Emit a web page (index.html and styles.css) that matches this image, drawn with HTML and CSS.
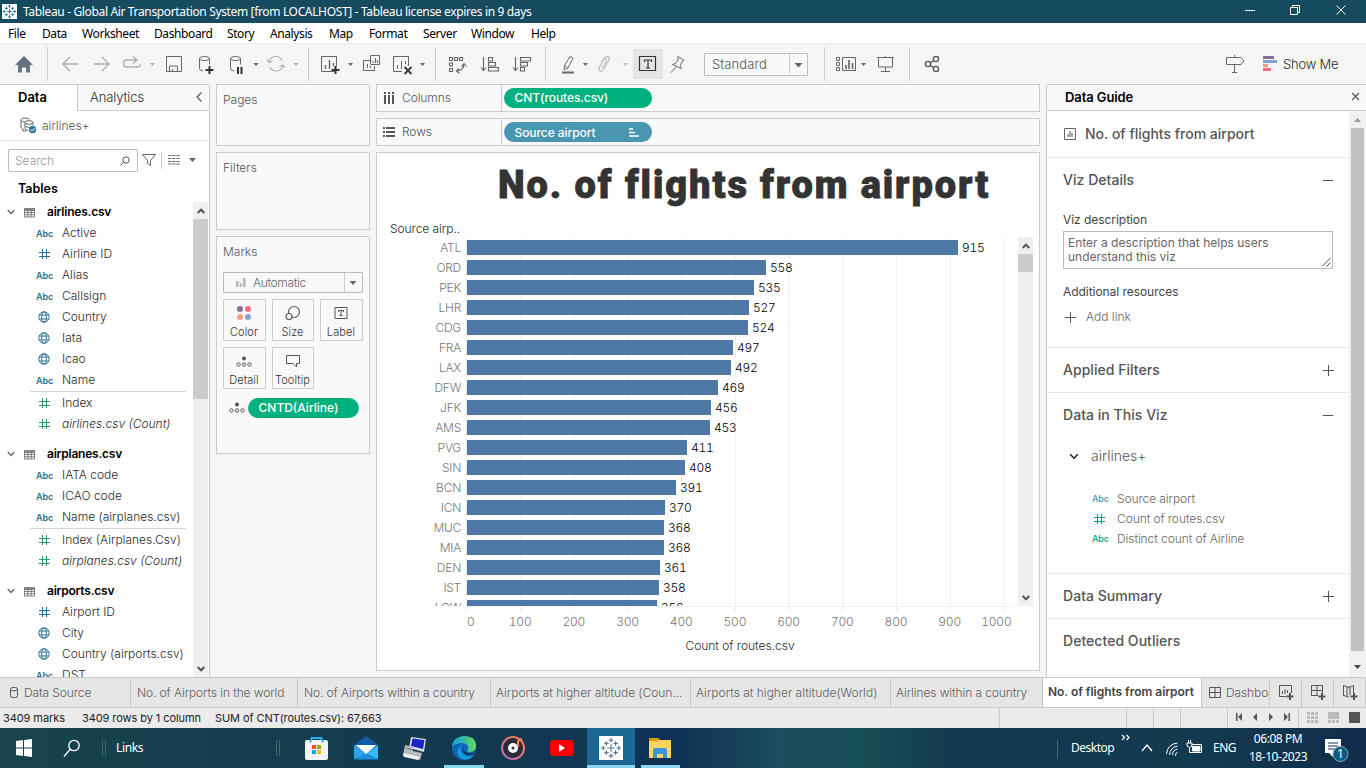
FILE: index.html
```html
<!DOCTYPE html>
<html lang="en">
<head>
<meta charset="utf-8">
<title>Tableau - Global Air Transportation System</title>
<link rel="stylesheet" href="styles.css">
</head>
<body>
<svg class="defs" width="0" height="0">
  <defs>
    <symbol id="hash" viewBox="0 0 12 12"><path d="M4.500 1v10M8.500 1v10M1 4.500h11M1 8.500h11" fill="none" stroke="currentColor" stroke-width="1"/></symbol>
    <symbol id="globe" viewBox="0 0 12 12"><g fill="none" stroke="currentColor"><circle cx="6" cy="6" r="5.2"/><ellipse cx="6" cy="6" rx="2.3" ry="5.2"/><path d="M1.4 4h9.200M1.400 8h9.200"/></g></symbol>
    <symbol id="table" viewBox="0 0 11 11"><path d="M.5 1.500h10v8.500H.5zM.5 3.500h10M.5 5.500h10M.5 7.700h10M3.800 3v7M7.200 3v7M.5 2.500h10" fill="none" stroke="#666" stroke-width=".8"/></symbol>
    <symbol id="chev" viewBox="0 0 8 6"><path d="M.7 1l3.300 3.500L7.300 1" fill="none" stroke="currentColor" stroke-width="1.300"/></symbol>
    <symbol id="arrow" viewBox="0 0 8 6"><path d="M.7 1l3.300 3.300L7.300 1" fill="none" stroke="currentColor" stroke-width="2"/></symbol>
    <symbol id="logo" viewBox="0 0 24 24"><g fill="none" stroke="currentColor" stroke-width="1.300"><path d="M12 8v8M8 12h8M12 1v5M9.500 3.500h5M12 18v5M9.500 20.500h5M3.500 9.500v5M1 12h5M20.500 9.500v5M18 12h5M7 4.500v5M4.500 7h5M17 4.500v5M14.500 7h5M7 14.500v5M4.500 17h5M17 14.500v5M14.500 17h5"/></g></symbol>
    <symbol id="detail" viewBox="0 0 16 12"><circle cx="8" cy="2.500" r="2" fill="#555"/><g fill="none" stroke="#555"><circle cx="2.500" cy="8.500" r="1.700"/><circle cx="8" cy="8.500" r="1.700"/><circle cx="13.500" cy="8.500" r="1.700"/></g></symbol>
  </defs>
</svg>

<header class="titlebar">
  <span class="app-logo"><svg width="15" height="15"><use href="#logo"/></svg></span>
  <span class="win-title">Tableau - Global Air Transportation System [from LOCALHOST] - Tableau license expires in 9 days</span>
  <svg class="win-buttons" width="126" height="23" viewBox="1240 0 126 23" fill="none" stroke="#fff"><path d="M1245 10.500h10M1290.500 7.500h7v7h-7zM1292.500 7.500v-2h7v7h-2M1336.500 5.500l9 9M1345.500 5.500l-9 9"/></svg>
</header>

<nav class="menubar"><span class="m1">File</span><span class="m2">Data</span><span class="m3">Worksheet</span><span class="m4">Dashboard</span><span class="m5">Story</span><span class="m6">Analysis</span><span class="m7">Map</span><span class="m8">Format</span><span class="m9">Server</span><span class="m10">Window</span><span class="m11">Help</span></nav>

<div class="toolbar">
  <svg width="47" height="41" viewBox="0 43 47 41"><path d="M15 65l9-9 9 9h-3v7.500h-4v-5h-4v5h-4V65z" fill="#66737f"/></svg>
  <i class="sep"></i>
  <svg width="112" height="41" viewBox="48 43 112 41" fill="none" stroke="#b0b0b0" stroke-width="1.400"><path d="M78 64H63M70 57l-7 7 7 7M94 64h15M102 57l7 7-7 7M137 60h-10q-3.500 0-3.500 3.500t3.500 3.500h10q3.500 0 3.500-3M133 56.500l4 3.500-4 3.500"/><path d="M150 63h5l-2.500 3z" fill="#b0b0b0" stroke="none"/></svg>
  <svg width="30" height="41" viewBox="160 43 30 41" fill="none" stroke="#666"><path d="M166.500 56.500h15v15h-15zM169.500 71v-5h8v5M172.500 71v-2"/></svg>
  <svg width="72" height="41" viewBox="190 43 72 41" fill="none" stroke="#666"><ellipse cx="204.500" cy="58.500" rx="5" ry="2"/><path d="M199.500 58.500v10q0 2 3.500 2.500M209.500 58.500v6"/><path d="M209.500 66v8M205.500 70h8" stroke="#333" stroke-width="2"/><ellipse cx="235.500" cy="58.500" rx="5" ry="2"/><path d="M230.500 58.500v10q0 2 3.500 2.500M240.500 58.500v6"/><path d="M238 67v7M241.500 67v7" stroke="#333" stroke-width="2"/><path d="M253.500 63h5l-2.500 3z" fill="#666" stroke="none"/></svg>
  <svg width="46" height="41" viewBox="262 43 46 41" fill="none" stroke="#b0b0b0" stroke-width="1.200"><path d="M269 62q1-5.500 7-5.500 4 0 6 4M283 65q-1 6-7 6-4 0-6-4M267 59.500l2 3 3.500-1.500M285 68l-2-3-3.500 1.500"/><path d="M293.500 63h5l-2.500 3z" fill="#b0b0b0" stroke="none"/></svg>
  <i class="sep"></i>
  <svg width="126" height="41" viewBox="309 43 126 41" fill="none" stroke="#666"><path d="M334 71.500h-12.500v-15h15V66"/><path d="M325.500 69v-4M329.500 69v-9M333.500 66v-3" stroke-width="1.400"/><path d="M335.500 66v8M331.500 70h8" stroke="#333" stroke-width="2"/><path d="M370 60.500h-6.500v10h11V66M370.500 55.500h9v9h-9zM367.500 68v-4M370.500 68v-2M373 63v-2M375.500 63v-5M377.500 63v-3"/><path d="M402 71.500h-8.500v-15h15V66M397.500 69v-4M401.500 69v-8M405.500 64v-3"/><path d="M404.500 67l7 7M411.500 67l-7 7" stroke="#333" stroke-width="1.800"/><path d="M348 63h5l-2.500 3zM420 63h5l-2.500 3z" fill="#666" stroke="none"/></svg>
  <i class="sep"></i>
  <svg width="109" height="41" viewBox="436 43 109 41" fill="none" stroke="#666" stroke-width="1.100"><path d="M449.500 57.500h3v3h-3zM454.500 57.500h3v3h-3zM459.500 57.500h3v3h-3zM449.500 63h3v3h-3zM449.500 68.500h3v3h-3zM464 64q0 6-7 7M461.500 66.500l2.500-3 2.500 3M459 68.500l-2.500 2.500 3 2.500M483.500 57v13M481 67.500l2.500 3 2.500-3M488.500 57.500h4v3.500h-4zM488.500 62.500h7v3.500h-7zM488.500 67.500h10v3.500h-10zM515.500 57v13M513 67.500l2.500 3 2.500-3M520.500 57.500h10v3.500h-10zM520.500 62.500h7v3.500h-7zM520.500 67.500h4v3.500h-4z"/></svg>
  <i class="sep"></i>
  <svg width="87" height="41" viewBox="546 43 87 41" fill="none" stroke="#666"><path d="M570 56.500l3 1.500-5 10-4 2 .5-4.500zM564.500 65.500l3 2"/><path d="M562 72.500h12" stroke-width="2"/><path d="M583 63h5l-2.500 3z" fill="#666" stroke="none"/><path d="M602 68.500l4.500-8q.5-2-1-2t-2 1l-4 7.500q-1.500 4 .5 4.500t3.500-2l5-8.500q2-4-.5-4.500t-4 2l-2 3.500" stroke="#aaa"/><path d="M623 63h5l-2.500 3z" fill="#bbb" stroke="none"/></svg>
  <svg class="pressed" width="30" height="30" viewBox="633 49 30 30" fill="none" stroke="#333"><path d="M639.500 56.500h16v14h-16zM644.500 62v-2h7v2M648 60v8M646 68h4" stroke-width="1.200"/></svg>
  <svg width="41" height="41" viewBox="663 43 41 41" fill="none" stroke="#666"><path d="M678 56.500l6 4-2 1-1.500 4 1 3-9-4 3-1 2.500-3.500zM676 67l-5 5.500"/></svg>
  <div class="fit"><span>Standard</span><svg width="18" height="20" viewBox="0 0 18 20"><path d="M.5 0v20" stroke="#ccc"/><path d="M5.500 9h8l-4 4.500z" fill="#666"/></svg></div>
  <svg width="16" height="41"></svg>
  <i class="sep"></i>
  <svg width="84" height="41" viewBox="825 43 84 41" fill="none" stroke="#666"><path d="M836.500 57.500h3v3h-3zM836.500 62.500h3v3h-3zM836.500 67.500h3v3h-3zM842.500 57.500h13v13h-13z"/><path d="M846 69v-4M849 69v-9M852.500 69v-6" stroke-width="1.600"/><path d="M861 63h5l-2.500 3z" fill="#666" stroke="none"/><path d="M877 57.500h17M878.500 58v9h14v-9M885.500 56v2M885.500 67v5M881 71.500h9"/></svg>
  <i class="sep"></i>
  <svg width="290" height="41" viewBox="910 43 290 41" fill="none" stroke="#555" stroke-width="1.300"><circle cx="928" cy="64" r="2.600"/><circle cx="936" cy="59" r="2.600"/><circle cx="936" cy="69" r="2.600"/><path d="M930.500 63l3-2.500M930.500 65.500l3 2.200"/></svg>
  <svg width="78" height="41" viewBox="1200 43 78 41"><path d="M1226.500 57.500h14.500l3 3.500-3 3.500h-14.500zM1234.500 55v3M1234.500 64.500v8M1232 72.500h5" fill="none" stroke="#666"/><path d="M1263 56h11v3h-11z" fill="#866e99"/><path d="M1263 60h14v3h-14z" fill="#80a4cc"/><path d="M1263 64h5v3h-5z" fill="#f4a17b"/><path d="M1263 68h8v3h-8z" fill="#fa6a7c"/></svg>
  <span class="showme">Show Me</span>
</div>

<main class="workspace">
  <aside class="data-pane">
    <div class="pane-tabs"><b>Data</b><div class="analytics"><span>Analytics</span><svg width="8" height="12" viewBox="0 0 8 12"><path d="M6.500 1.500L2 6l4.500 4.500" fill="none" stroke="#555" stroke-width="1.200"/></svg></div></div>
    <div class="source"><svg width="17" height="17" viewBox="0 0 17 17" fill="none" stroke="#666"><path d="M3 12Q1 11 1 10V2.500Q1 1 5 1t4.500 1.500M1 3q1 2 4 2"/><ellipse cx="9" cy="5.500" rx="4" ry="1.800" fill="#fff"/><path d="M5 5.500v6q0 2 3 2M13 5.500v3M5 8.500q1 2 4 2M3 12v2h3"/><circle cx="12.500" cy="12.500" r="3.700" fill="#2d7da4" stroke="none"/><path d="M10.700 12.500l1.500 1.500 2.500-2.800" stroke="#fff"/></svg><span>airlines+</span></div>
    <div class="search-row">
      <div class="search"><span>Search</span><svg width="10" height="10" viewBox="0 0 10 10" fill="none" stroke="#555"><circle cx="6" cy="4" r="3.200"/><path d="M3.700 6.300L.5 9.500"/></svg></div>
      <svg width="70" height="23" viewBox="138 149 70 23" fill="none" stroke="#666"><path d="M142.500 154.500h13l-5 6v5l-3-2v-3z"/><path d="M161.500 152v17" stroke="#ccc"/><path d="M168 155.500h12M168 158.500h12M168 161.500h12M168 164h12" stroke-dasharray="3.200 1"/><path d="M189 158h7l-3.500 4z" fill="#666" stroke="none"/></svg>
    </div>
    <div class="tables-label">Tables</div>
    <div class="list-wrap">
      <div class="field-list">
        <div class="tbl"><svg width="8" height="6"><use href="#chev"/></svg><svg width="11" height="11"><use href="#table"/></svg><b>airlines.csv</b></div>
        <div class="fld"><em>Abc</em>Active</div>
        <div class="fld"><svg><use href="#hash"/></svg>Airline ID</div>
        <div class="fld"><em>Abc</em>Alias</div>
        <div class="fld"><em>Abc</em>Callsign</div>
        <div class="fld"><svg><use href="#globe"/></svg>Country</div>
        <div class="fld"><svg><use href="#globe"/></svg>Iata</div>
        <div class="fld"><svg><use href="#globe"/></svg>Icao</div>
        <div class="fld"><em>Abc</em>Name</div>
        <hr>
        <div class="fld green"><svg><use href="#hash"/></svg>Index</div>
        <div class="fld green"><svg><use href="#hash"/></svg><i>airlines.csv (Count)</i></div>
        <div class="tbl next"><svg width="8" height="6"><use href="#chev"/></svg><svg width="11" height="11"><use href="#table"/></svg><b>airplanes.csv</b></div>
        <div class="fld"><em>Abc</em>IATA code</div>
        <div class="fld"><em>Abc</em>ICAO code</div>
        <div class="fld"><em>Abc</em>Name (airplanes.csv)</div>
        <hr>
        <div class="fld green"><svg><use href="#hash"/></svg>Index (Airplanes.Csv)</div>
        <div class="fld green"><svg><use href="#hash"/></svg><i>airplanes.csv (Count)</i></div>
        <div class="tbl next"><svg width="8" height="6"><use href="#chev"/></svg><svg width="11" height="11"><use href="#table"/></svg><b>airports.csv</b></div>
        <div class="fld"><svg><use href="#hash"/></svg>Airport ID</div>
        <div class="fld"><svg><use href="#globe"/></svg>City</div>
        <div class="fld"><svg><use href="#globe"/></svg>Country (airports.csv)</div>
        <div class="fld"><em>Abc</em>DST</div>
      </div>
      <div class="scroll left-scroll"><svg class="up" width="8" height="6"><use href="#arrow"/></svg><i></i><svg class="down" width="8" height="6"><use href="#arrow"/></svg></div>
    </div>
  </aside>

  <section class="cards">
    <div class="card pages">Pages</div>
    <div class="card filters">Filters</div>
    <div class="card marks">Marks
      <div class="mark-type"><svg width="10" height="10" viewBox="0 0 10 10" fill="#b5b5b5"><path d="M0 3h2.500v6H0zM3.700 5h2v4h-2zM7 0h2.500v9H7z"/></svg><span>Automatic</span><svg width="18" height="19" viewBox="0 0 18 19"><path d="M.5 0v19" stroke="#ccc"/><path d="M5.500 8h7L9 12z" fill="#666"/></svg></div>
      <div class="mark-grid">
        <div><svg width="16" height="16" viewBox="0 0 16 16"><circle cx="4" cy="4" r="3" fill="#866e99"/><circle cx="12" cy="4" r="3" fill="#fa6a7c"/><circle cx="4" cy="12" r="3" fill="#f4a17b"/><circle cx="12" cy="12" r="3" fill="#80a4cc"/></svg>Color</div>
        <div><svg width="16" height="16" viewBox="0 0 16 16" fill="none" stroke="#555" stroke-width="1.100"><circle cx="9" cy="7" r="5.500"/><circle cx="4" cy="11.500" r="3" fill="#f9f9f9"/></svg>Size</div>
        <div><svg width="16" height="16" viewBox="0 0 16 16" fill="none" stroke="#555"><path d="M2 2.500h12v11H2zM5.500 7V5.500h5V7M8 5.500v5M6.500 10.500h3"/></svg>Label</div>
        <div><svg width="16" height="16" viewBox="0 -3 16 16"><use href="#detail" width="16" height="12"/></svg>Detail</div>
        <div><svg width="16" height="16" viewBox="0 0 16 16" fill="none" stroke="#555"><path d="M1.500 2.500h13v8h-3v3.500L8 10.500H1.500z"/></svg>Tooltip</div>
      </div>
      <div class="mark-pill"><svg width="16" height="12"><use href="#detail"/></svg><span class="pill green-pill">CNTD(Airline)</span></div>
    </div>
  </section>

  <section class="sheet">
    <div class="shelf"><div><svg width="12" height="12" viewBox="0 0 12 12"><path d="M2 0v2M2 3v9M6 0v2M6 3v9M10 0v2M10 3v9" stroke="#555" stroke-width="2"/></svg>Columns</div><span class="pill green-pill">CNT(routes.csv)</span></div>
    <div class="shelf"><div><svg width="12" height="12" viewBox="0 0 12 12"><path d="M0 2h2M3 2h9M0 6h2M3 6h9M0 10h2M3 10h9" stroke="#555" stroke-width="2"/></svg>Rows</div><span class="pill blue-pill">Source airport<svg width="11" height="9" viewBox="0 0 11 9"><path d="M0 1h4M0 4.500h6M0 8h10" stroke="#fff" stroke-width="1.600"/></svg></span></div>
    <div class="viz">
      <h1>No. of flights from airport</h1>
      <div class="row-title">Source airp..</div>
      <div class="chart-area">
        <svg class="grid" width="549" height="376" viewBox="465 237 549 376"><path d="M466.500 237v375M520.500 237v375M574.500 237v375M627.500 237v375M681.500 237v375M735.500 237v375M789.500 237v375M842.500 237v375M896.500 237v375M950.500 237v375M1004.500 237v375M466 606.500h548" stroke="#f0f0f0"/></svg>
        <div class="plot">
          <div class="bar-row"><span>ATL</span><i style="width:491px"></i><b>915</b></div>
          <div class="bar-row"><span>ORD</span><i style="width:299px"></i><b>558</b></div>
          <div class="bar-row"><span>PEK</span><i style="width:287px"></i><b>535</b></div>
          <div class="bar-row"><span>LHR</span><i style="width:282px"></i><b>527</b></div>
          <div class="bar-row"><span>CDG</span><i style="width:281px"></i><b>524</b></div>
          <div class="bar-row"><span>FRA</span><i style="width:266px"></i><b>497</b></div>
          <div class="bar-row"><span>LAX</span><i style="width:264px"></i><b>492</b></div>
          <div class="bar-row"><span>DFW</span><i style="width:251px"></i><b>469</b></div>
          <div class="bar-row"><span>JFK</span><i style="width:244px"></i><b>456</b></div>
          <div class="bar-row"><span>AMS</span><i style="width:243px"></i><b>453</b></div>
          <div class="bar-row"><span>PVG</span><i style="width:220px"></i><b>411</b></div>
          <div class="bar-row"><span>SIN</span><i style="width:218px"></i><b>408</b></div>
          <div class="bar-row"><span>BCN</span><i style="width:209px"></i><b>391</b></div>
          <div class="bar-row"><span>ICN</span><i style="width:198px"></i><b>370</b></div>
          <div class="bar-row"><span>MUC</span><i style="width:197px"></i><b>368</b></div>
          <div class="bar-row"><span>MIA</span><i style="width:197px"></i><b>368</b></div>
          <div class="bar-row"><span>DEN</span><i style="width:193px"></i><b>361</b></div>
          <div class="bar-row"><span>IST</span><i style="width:192px"></i><b>358</b></div>
          <div class="bar-row"><span>LGW</span><i style="width:190px"></i><b>356</b></div>
        </div>
        <div class="scroll viz-scroll"><svg class="up" width="8" height="6"><use href="#arrow"/></svg><i></i><svg class="down" width="8" height="6"><use href="#arrow"/></svg></div>
      </div>
      <div class="axis"><span class="first">0</span><span>100</span><span>200</span><span>300</span><span>400</span><span>500</span><span>600</span><span>700</span><span>800</span><span>900</span><span class="last">1000</span></div>
      <div class="axis-title">Count of routes.csv</div>
    </div>
  </section>

  <aside class="guide">
    <div class="guide-head"><b>Data Guide</b><svg width="9" height="9" viewBox="0 0 9 9"><path d="M1 1l7 7M8 1L1 8" stroke="#555" stroke-width="1.200"/></svg></div>
    <div class="guide-main">
      <div class="guide-body">
        <div class="g-title"><svg width="12" height="12" viewBox="0 0 12 12"><path d="M.5.5h11v11H.5z" fill="none" stroke="#666"/><path d="M3 9V6h2V3h2v2h2v4z" fill="#aaa"/></svg>No. of flights from airport</div>
        <div class="g-details">
          <h2>Viz Details<i class="minus"></i></h2>
          <label>Viz description</label>
          <div class="textarea">Enter a description that helps users<br>understand this viz<svg width="9" height="9" viewBox="0 0 9 9"><path d="M0 8.500L8.500 0M4.500 8.500l4-4" stroke="#555"/></svg></div>
          <label class="res">Additional resources</label>
          <div class="add"><i class="plus"></i>Add link</div>
        </div>
        <div class="g-one"><h2>Applied Filters<i class="plus"></i></h2></div>
        <div class="g-data">
          <h2>Data in This Viz<i class="minus"></i></h2>
          <div class="g-source"><svg width="10" height="7"><use href="#chev" width="10" height="7"/></svg>airlines+</div>
          <div class="g-field blue"><em>Abc</em>Source airport</div>
          <div class="g-field"><svg width="12" height="12" viewBox="0 0 12 12"><path d="M4.500 1v10M8.500 1v10M1 4.500h11M1 8.500h11" fill="none" stroke="#00a87e" stroke-width="1.200"/></svg>Count of routes.csv</div>
          <div class="g-field"><em>Abc</em>Distinct count of Airline</div>
        </div>
        <div class="g-one"><h2>Data Summary<i class="plus"></i></h2></div>
        <div class="g-one end"><h2>Detected Outliers</h2></div>
      </div>
      <div class="guide-scroll"><svg width="17" height="17" viewBox="0 0 17 17"><path d="M5 11h7L8.500 7z" fill="#999"/></svg><i></i><svg width="17" height="26" viewBox="0 0 17 26"><path d="M5 14h7l-3.500 4z" fill="#444"/></svg></div>
    </div>
  </aside>
</main>

<div class="sheet-tabs">
  <span class="t1"><svg width="8" height="12" viewBox="0 0 8 12" fill="none" stroke="#555"><rect x=".5" y=".5" width="7" height="10" rx="2"/><path d="M.5 3q3.500 2 7 0"/></svg>Data Source</span>
  <span class="t2">No. of Airports in the world</span><span class="t3">No. of Airports within a country</span><span class="t4">Airports at higher altitude (Coun...</span><span class="t5">Airports at higher altitude(World)</span><span class="t6">Airlines within a country</span><b class="t7">No. of flights from airport</b>
  <span class="t8"><svg width="12" height="12" viewBox="0 0 12 12" fill="none" stroke="#555"><path d="M.5.5h11v10H.5zM.5 5.500h11M6 0v11"/></svg>Dashboard</span>
  <span class="tn"><svg width="17" height="16" viewBox="0 0 17 16" fill="none" stroke="#555"><path d="M8 11.500H1.500V.5h12V8M4.500 9V6M7 9V4M9.500 8V5"/><path d="M12 8v7M8.500 11.500h7" stroke-width="2"/></svg></span>
  <span class="tn"><svg width="17" height="16" viewBox="0 0 17 16" fill="none" stroke="#555"><path d="M8 10.500H1.500V.5h11V8M1.500 5.500h11M7 .5v10"/><path d="M12 8v7M8.500 11.500h7" stroke-width="2"/></svg></span>
  <span class="tn"><svg width="17" height="16" viewBox="0 0 17 16" fill="none" stroke="#555"><path d="M7 12L1.500 10.500V.5L5 2v9M5 2h3l3.500-1.500v8M8 2v8"/><path d="M12 8v7M8.500 11.500h7" stroke-width="2"/></svg></span>
</div>

<div class="status">
  <span class="s1">3409 marks</span><span class="s2">3409 rows by 1 column</span><span class="s3">SUM of CNT(routes.csv): 67,663</span>
  <svg width="386" height="20" viewBox="980 708 386 20"><path d="M999.500 708v20M1126.500 708v20M1153.500 708v20M1180.500 708v20M1227.500 708v20M1298.500 708v20" stroke="#c8c8c8"/><g fill="#555"><path d="M1236 713h1.500v8h-1.500zM1242 713v8l-4-4zM1257 713v8l-4-4zM1269 713v8l4-4zM1284 713v8l4-4zM1288.500 713h1.500v8h-1.500z"/><path d="M1349 712h11v11h-11z"/></g><g fill="#bbb"><path d="M1307 712h3v3h-3zM1311 712h3v3h-3zM1315 712h3v3h-3zM1307 716h3v3h-3zM1311 716h3v3h-3zM1315 716h3v3h-3zM1307 720h3v3h-3zM1311 720h3v3h-3zM1315 720h3v3h-3zM1328 712h11v7h-11zM1328 720h3v3h-3zM1332 720h3v3h-3zM1336 720h3v3h-3z"/></g></svg>
</div>

<footer class="taskbar">
  <svg width="112" height="40" viewBox="0 728 112 40"><path d="M16 741l7-1v7.500h-7zM24 740l8-1v8.500h-8zM16 748.500h7v7.500l-7-1zM24 748.500h8v8.500l-8-1z" fill="#fff"/><g fill="none" stroke="#fff" stroke-width="1.300"><circle cx="74" cy="745.500" r="5.200"/><path d="M70 749.500l-6 7"/></g><path d="M102.500 740v16M105.500 740v16" stroke="#47646f"/></svg>
  <span class="links">Links</span>
  <svg width="146" height="40" viewBox="149 728 146 40"><path d="M276.500 740v16M279.500 740v16" stroke="#47646f"/></svg>
  <svg width="46" height="40" viewBox="295 728 46 40"><path d="M311.500 742v-4h10v4" fill="none" stroke="#1eb5f0" stroke-width="2"/><rect x="305" y="740" width="23" height="20" rx="2" fill="#f4f4f4"/><path d="M310.500 740v2.500M322.500 740v2.500" stroke="#1eb5f0" stroke-width="2"/><path d="M312 745h4v4h-4z" fill="#f25022"/><path d="M317 745h4v4h-4z" fill="#7fba00"/><path d="M312 750h4v4h-4z" fill="#00a4ef"/><path d="M317 750h4v4h-4z" fill="#ffb900"/></svg>
  <svg width="49" height="40" viewBox="341 728 49 40"><path d="M354 745l12-9 12 9v14h-24z" fill="#0f5ca8"/><path d="M354 745l12 9-12 5z" fill="#28a7ea"/><path d="M378 745l-12 9 12 5z" fill="#38b9f5"/><path d="M354 759.500l12-7 12 7z" fill="#1b90e0"/><path d="M355.500 745h21l-10.500 9z" fill="#fff"/></svg>
  <svg width="49" height="40" viewBox="390 728 49 40"><path d="M411 737l15 2-2 13-15-4z" fill="#dcdcdc"/><path d="M412.500 738.500l12 1.500-1.500 9-12-3z" fill="#1726ca"/><path d="M405 745l8 2v4l9 2-2 7-17-4z" fill="#b8bcc0"/><path d="M403 753l17 4-2 3-14-3z" fill="#eee"/><path d="M406 748l7 2" stroke="#666"/></svg>
  <svg width="49" height="40" viewBox="439 728 49 40"><defs><linearGradient id="edgeg"><stop stop-color="#139fe2"/><stop offset="1" stop-color="#61da5a"/></linearGradient></defs><circle cx="464" cy="748" r="12" fill="#0c65b9"/><path d="M452 748q0-11 12-12 12 0 12 10c0 6-6 7-9 5 3-4 0-8-5-8-6 0-10 3-10 5z" fill="url(#edgeg)"/><path d="M464 744q-6 4-2 9 4 5 12 2-5 6-12 4-6-3-4-9 1-4 6-6z" fill="#169bd4"/><path d="M464 746q-2 5 3 7 4 1 8-1l-3 3q-8 1-9-4 0-3 1-5z" fill="#123350"/><path d="M444 765h40v3h-40z" fill="#8bd5f3"/></svg>
  <svg width="49" height="40" viewBox="488 728 49 40"><defs><linearGradient id="music" x1="1" y1="0" x2="0" y2="1"><stop stop-color="#ff8040"/><stop offset="1" stop-color="#b46bc3"/></linearGradient></defs><circle cx="513" cy="748" r="11" fill="#292b35" stroke="url(#music)" stroke-width="2"/><circle cx="513" cy="748" r="5" fill="#fff"/><circle cx="513" cy="748" r="1.500" fill="#333"/><path d="M518 747v-6l4-2" stroke="#ff865b" fill="none" stroke-width="2"/></svg>
  <svg width="50" height="40" viewBox="537 728 50 40"><rect x="550" y="740" width="24" height="16" rx="4" fill="#f00"/><path d="M559 744v8l6-4z" fill="#fff"/></svg>
  <span class="tab-task"><span><svg width="22" height="22"><use href="#logo"/></svg></span></span>
  <svg width="425" height="40" viewBox="635 728 425 40"><path d="M649 738h9l2 2h11v18h-22z" fill="#ffd45c"/><path d="M649 738h9l1 3h-10z" fill="#dd9b10"/><path d="M653 758v-8q0-2 2-2h10q2 0 2 2v8h-4v-4h-6v4z" fill="#3b96dd"/><path d="M641 765h39v3h-39z" fill="#8bd5f3"/><path d="M1057.500 740v18M1060.500 740v18" stroke="#47646f"/></svg>
  <span class="desk">Desktop</span>
  <svg width="99" height="40" viewBox="1114 728 99 40" fill="none" stroke="#fff"><path d="M1122 735l2.500 2.500-2.500 2.500M1126.500 735l2.500 2.500-2.500 2.500" stroke-width="1.300"/><path d="M1142 751l5-6 5 6" stroke-width="1.300"/><path d="M1166.500 754q1-10 11-11M1169.500 755q1-8 8-9M1172.500 755q0-5 5-6M1175.500 756q0-3 2-4"/><path d="M1191.500 744.500h10v8h-12v-3M1187 743h5v3q-2 3-5 0zM1188.500 740v3M1190.500 740v3M1189.500 748v4"/><path d="M1192.500 746.500h7.500v4.500h-7.500z" fill="#fff"/></svg>
  <span class="lang">ENG</span>
  <span class="clock">06:08 PM<br>18-10-2023</span>
  <span class="notice"><svg width="26" height="26" viewBox="0 0 26 26"><path d="M1 2h16v14h-8v4l-4-4H1z" fill="#fff"/><path d="M4 6h10M4 9h10M4 12h7" stroke="#12344f"/><circle cx="16.500" cy="17" r="7.500" fill="#0a5c85" stroke="#84a9bb"/></svg><i>1</i></span>
</footer>
</body>
</html>
```
FILE: styles.css
```css
* { box-sizing: border-box; }
body { margin: 0; width: 1366px; height: 768px; overflow: hidden; display: flex; flex-direction: column; background: #f5f5f5; font: 350 12px/16px Inter, "Liberation Sans", sans-serif; color: #2a2a2a; white-space: nowrap; }
svg { display: block; flex: none; }
i { font-style: normal; }
.defs { position: absolute; }

.titlebar { height: 23px; flex: none; display: flex; align-items: center; background: #154a5f; color: #fff; font: 12px/23px "Noto Sans", sans-serif; }
.app-logo { width: 15px; height: 15px; margin: 0 6px 0 2px; background: #fff; color: #246589; }
.win-title { width: 1217px; letter-spacing: -.35px; }
.menubar { height: 20px; flex: none; display: flex; background: #fff; color: #000; font: 12px/21px "Noto Sans", sans-serif; letter-spacing: -.4px; padding-left: 8px; }
.m1 { width: 34px; } .m2 { width: 40px; } .m3 { width: 72px; } .m4 { width: 73px; } .m5 { width: 43px; } .m6 { width: 59px; } .m7 { width: 40px; } .m8 { width: 54px; } .m9 { width: 48px; } .m10 { width: 60px; }
.toolbar { height: 41px; flex: none; display: flex; align-items: center; border-top: 1px solid #eee; }
.toolbar > svg { margin-top: -1px; }
.sep { width: 1px; height: 34px; background: #ccc; flex: none; }
.pressed { background: #e4e4e4; }
.fit { width: 104px; height: 23px; display: flex; justify-content: space-between; border: 1px solid #bbb; border-radius: 1px; padding-left: 7px; color: #555; font-size: 13px; line-height: 20px; letter-spacing: .1px; background: #f8f8f8; }
.showme { margin-left: 5px; font-size: 13px; letter-spacing: -.2px; }

.workspace { flex: none; height: 593px; display: flex; }
.data-pane { width: 210px; border: solid #ccc; border-width: 1px 1px 0 0; background: #fff; display: flex; flex-direction: column; }
.pane-tabs { height: 26px; flex: none; display: flex; }
.pane-tabs b { width: 77px; padding-left: 18px; color: #000; font-size: 13px; line-height: 25px; font-weight: 600; }
.analytics { flex: 1; display: flex; align-items: center; justify-content: space-between; border: solid #ccc; border-width: 0 0 1px 1px; background: #f9f9f9; padding: 0 6px 1px 12px; font-size: 13px; letter-spacing: -.1px; }
.source { height: 30px; flex: none; display: flex; align-items: center; gap: 5px; padding-left: 20px; border-bottom: 1px solid #ddd; color: #555; }
.search-row { display: flex; margin: 8px 0 0 8px; height: 23px; flex: none; }
.search { width: 130px; display: flex; align-items: center; justify-content: space-between; border: 1px solid #bbb; padding: 0 7px 0 6px; color: #999; border-radius: 1px; }
.tables-label { height: 29px; flex: none; padding: 9px 0 0 18px; font-size: 12.500px; font-weight: 600; color: #000; }
.list-wrap { flex: 1; min-height: 0; display: flex; overflow: hidden; }
.field-list { width: 193px; }
.tbl { height: 21px; display: flex; align-items: center; padding-left: 7px; color: #666; }
.tbl svg { margin-top: 1px; }
.tbl svg + svg { margin-left: 9px; }
.tbl b { margin-left: 12px; color: #000; font-weight: 600; letter-spacing: -.22px; }
.next { margin-top: 9px; }
.fld { height: 21px; display: flex; align-items: center; padding-left: 36px; letter-spacing: 0; }
.fld svg { width: 12px; height: 12px; margin: 1px 12px 0 2px; color: #2b7191; }
.fld em { width: 26px; color: #2b7191; font: 600 9px/12px Inter, sans-serif; padding-top: 2px; letter-spacing: -.1px; }
.fld i { font-style: italic; }
.green svg { color: #2f9673; }
hr { height: 1px; margin: 1px 7px 0 30px; border: 0; background: #d4d4d4; }
.scroll { width: 15px; background: #efefef; display: flex; flex-direction: column; align-items: center; color: #555; }
.scroll i { width: 15px; background: #ccc; }
.scroll .up { transform: rotate(180deg); margin: 6px 0 5px; }
.scroll .down { margin: auto 0 5px; }
.left-scroll { margin-top: 1px; }
.left-scroll i { height: 180px; }

.cards { width: 154px; margin-left: 6px; display: flex; flex-direction: column; gap: 6px; }
.card { border: 1px solid #ccc; background: #f9f9f9; padding: 7px 6px; color: #555; }
.pages { height: 62px; } .filters { height: 78px; } .marks { height: 218px; }
.mark-type { display: flex; align-items: center; width: 140px; height: 21px; margin: 12px 0 6px; border: 1px solid #bbb; padding-left: 12px; border-radius: 1px; color: #666; }
.mark-type span { width: 99px; padding-left: 7px; letter-spacing: -.35px; }
.mark-grid { display: grid; grid-template-columns: 43px 42px 43px; grid-auto-rows: 42px; gap: 6px; }
.mark-grid div { border: 1px solid #ccc; display: flex; flex-direction: column; align-items: center; padding: 5px 1px 0 0; gap: 3px; font-size: 11px; letter-spacing: .1px; color: #333; }
.mark-pill { display: flex; align-items: center; gap: 3px; margin: 9px 0 0 6px; }
.pill { height: 20px; border-radius: 10px; color: #fff; line-height: 19px; padding-left: 10.500px; font-weight: 500; letter-spacing: -.08px; }
.green-pill { background: #00b180; }
.blue-pill { background: #4996b2; display: flex; align-items: center; justify-content: space-between; padding-right: 12px; }
.mark-pill .pill { width: 111px; letter-spacing: 0; }

.sheet { width: 664px; margin-left: 6px; display: flex; flex-direction: column; gap: 6px; }
.shelf { height: 28px; flex: none; border: 1px solid #ccc; background: #f9f9f9; display: flex; align-items: center; }
.shelf div { width: 125px; height: 26px; border-right: 1px solid #ccc; display: flex; align-items: center; gap: 7px; padding-left: 6px; color: #555; letter-spacing: -.1px; }
.shelf .pill { width: 148px; margin-left: 2px; }
.viz { flex: none; height: 519px; border: 1px solid #ccc; background: #fff; }
h1 { margin: 0; height: 66px; padding: 8px 0 0 121px; font: 900 38px/48px Roboto, sans-serif; letter-spacing: 1.900px; -webkit-text-stroke: .8px #333; color: #333; }
.row-title { height: 18px; padding: 2px 0 0 13px; letter-spacing: -.05px; }
.chart-area { position: relative; height: 369px; display: flex; }
.grid { position: absolute; left: 88px; top: 0; }
.plot { position: relative; width: 641px; overflow: hidden; }
.bar-row { height: 20px; display: flex; align-items: center; line-height: 18px; }
.bar-row span { width: 84px; text-align: right; color: #777; margin-right: 6px; padding-top: 2px; letter-spacing: -.25px; }
.bar-row i { height: 15px; background: #4e79a7; margin-top: 1px; }
.bar-row b { margin-left: 4px; font-weight: 350; color: #000; padding-top: 2px; letter-spacing: -.3px; font-variant-numeric: tabular-nums; }
.viz-scroll i { height: 18px; }
.axis { height: 25px; margin-left: 90px; display: flex; padding-top: 8px; color: #777; letter-spacing: -.2px; font-variant-numeric: tabular-nums; }
.axis span { width: 53.700px; text-align: center; }
.axis .first { width: 26.300px; text-align: left; }
.axis .last { width: 35px; text-align: right; }
.axis-title { text-align: center; padding: 7px 0 0 64px; letter-spacing: -.02px; }

.guide { width: 320px; margin-left: 6px; border: 1px solid #ccc; border-width: 1px 0 0 1px; background: #fff; color: #555; }
.guide-head { height: 26px; display: flex; align-items: center; justify-content: space-between; padding: 0 6px 2px 18px; background: #f9f9f9; border-bottom: 1px solid #ccc; color: #000; font-size: 13px; }
.guide-head b { font-weight: 600; letter-spacing: -.1px; }
.guide-main { display: flex; height: 566px; }
.guide-body { width: 302px; }
.g-title { height: 47px; border-bottom: 1px solid #e8e8e8; display: flex; align-items: center; gap: 9px; padding-left: 17px; font-size: 14px; font-weight: 500; }
h2 { margin: 0; font: 500 14px/44px Inter, sans-serif; height: 44px; letter-spacing: .04px; display: flex; justify-content: space-between; align-items: center; }
.minus { width: 10px; height: 1px; background: #555; margin-right: 1px; }
.plus { width: 11px; height: 11px; background: linear-gradient(#555, #555) 5px 0 / 1px 11px no-repeat, linear-gradient(#555, #555) 0 5px / 11px 1px no-repeat; }
.g-details { height: 190px; padding: 0 15px 0 16px; border-bottom: 1px solid #e8e8e8; }
label { display: block; margin-top: 10px; letter-spacing: -.05px; color: #444; font-weight: 400; }
.textarea { position: relative; width: 270px; height: 38px; border: 1px solid #bbb; margin-top: 3px; padding: 4px; line-height: 14px; color: #666; font-weight: 400; letter-spacing: 0; }
.textarea svg { position: absolute; right: 1px; bottom: 1px; }
label.res { margin-top: 15px; }
.add { display: flex; align-items: center; gap: 10px; padding-left: 2px; margin-top: 9px; color: #666; }
.g-one { height: 45px; padding: 0 15px 0 16px; border-bottom: 1px solid #e8e8e8; }
.g-data { height: 181px; padding: 0 15px 0 16px; border-bottom: 1px solid #e8e8e8; }
.g-source { display: flex; align-items: center; gap: 12px; height: 20px; margin: 9px 0 23px 6px; font-size: 14px; letter-spacing: 0; }
.g-source svg { color: #222; }
.g-field { height: 20px; display: flex; align-items: center; padding-left: 29px; letter-spacing: -.08px; color: #666; }
.g-field em { width: 25px; font: 500 9px/12px Inter, sans-serif; color: #00a27a; }
.g-field.blue em { color: #4295b5; }
.g-field svg { margin: 0 12px 0 1px; }
.end { border: 0; }
.guide-scroll { width: 17px; background: #f1f1f1; }
.guide-scroll i { display: block; width: 13px; height: 523px; margin-left: 2px; background: #c1c1c1; }

.sheet-tabs { height: 31px; flex: none; display: flex; background: #e6e6e6; border: solid #c8c8c8; border-width: 1px 0; color: #606060; }
.sheet-tabs > * { display: flex; align-items: center; border-right: 1px solid #c8c8c8; padding-left: 6px; overflow: hidden; letter-spacing: -.1px; flex: none; }
.sheet-tabs .t1 { width: 131px; gap: 6px; padding-left: 10px; }
.t2 { width: 167px; } .t3 { width: 193px; } .t4 { width: 200px; } .t5 { width: 200px; } .t6 { width: 152px; }
.sheet-tabs .t4, .sheet-tabs .t5, .sheet-tabs .t6 { padding-left: 5px; }
.sheet-tabs .t4 { letter-spacing: -.05px; }
.sheet-tabs .t5 { letter-spacing: 0; }
.sheet-tabs .t7 { width: 159px; background: #fff; color: #444; font-weight: 600; padding: 0 0 2px 5px; letter-spacing: -.03px; }
.sheet-tabs .t8 { width: 68px; gap: 5px; padding-left: 7px; }
.sheet-tabs .tn { width: 32px; padding-left: 8px; }
.status { height: 20px; flex: none; display: flex; background: #ebebeb; line-height: 20px; padding-left: 3px; font-size: 11px; letter-spacing: -.08px; color: #222; font-weight: 375; }
.s1 { width: 79px; } .s2 { width: 133px; } .s3 { width: 765px; }

.taskbar { height: 40px; flex: none; display: flex; align-items: center; color: #fff; font: 12px/18px "Noto Sans", sans-serif; background: linear-gradient(90deg, #17434f 0, #143d4d 280px, #113653 580px, #0f3153 680px, #1c4d60 780px, #174e56 860px, #12374f 960px, #123b50 1180px, #102d4b 1366px); }
.links { width: 33px; margin-left: 4px; letter-spacing: -.35px; }
.tab-task { width: 48px; height: 40px; background: #1b6992; border-bottom: 3px solid #8bd5f3; padding: 8px 0 0 12px; }
.tab-task span { display: block; width: 24px; height: 24px; background: #fff; color: #55809c; padding: 1px; }
.desk { width: 43px; margin-left: 11px; letter-spacing: -.5px; }
.lang { width: 27px; letter-spacing: -.5px; }
.clock { width: 76px; text-align: center; letter-spacing: -.45px; }
.notice { position: relative; margin: 3px 0 0 8px; }
.notice i { position: absolute; left: 13px; top: 8px; font-size: 12px; }
```
